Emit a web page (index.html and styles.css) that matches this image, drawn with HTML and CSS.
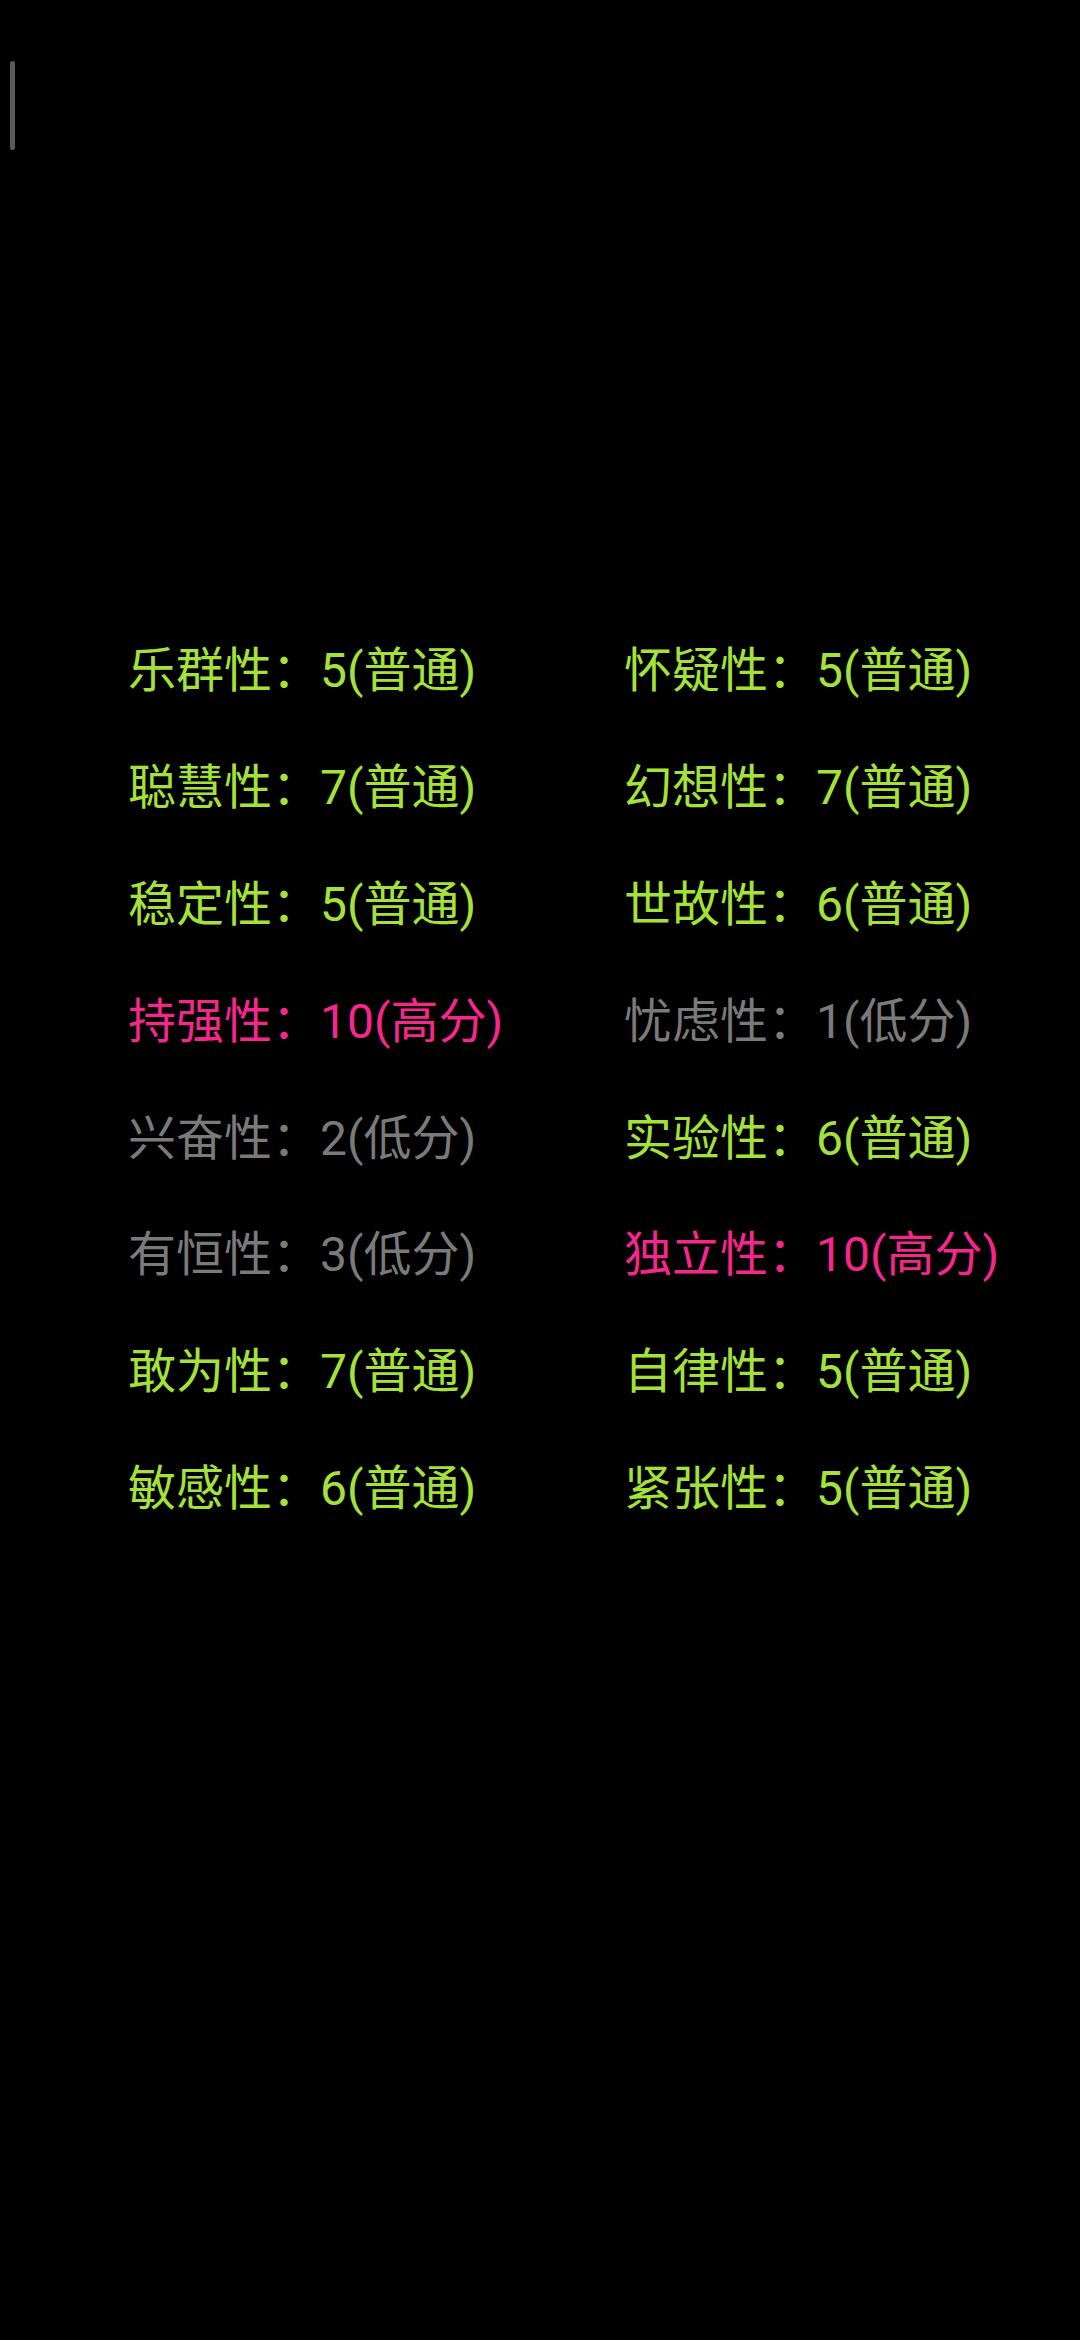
FILE: index.html
```html
<!DOCTYPE html>
<html lang="zh-CN">
<head>
<meta charset="utf-8">
<link rel="stylesheet" href="styles.css">
</head>
<body>
<div class="page">
  <div class="cursor"></div>
  <div class="grid">
    <div class="item normal">乐群性：5(普通)</div>
    <div class="item normal">怀疑性：5(普通)</div>
    <div class="item normal">聪慧性：7(普通)</div>
    <div class="item normal">幻想性：7(普通)</div>
    <div class="item normal">稳定性：5(普通)</div>
    <div class="item normal">世故性：6(普通)</div>
    <div class="item high">持强性：10(高分)</div>
    <div class="item low">忧虑性：1(低分)</div>
    <div class="item low">兴奋性：2(低分)</div>
    <div class="item normal">实验性：6(普通)</div>
    <div class="item low">有恒性：3(低分)</div>
    <div class="item high">独立性：10(高分)</div>
    <div class="item normal">敢为性：7(普通)</div>
    <div class="item normal">自律性：5(普通)</div>
    <div class="item normal">敏感性：6(普通)</div>
    <div class="item normal">紧张性：5(普通)</div>
  </div>
</div>
</body>
</html>
```
FILE: styles.css
```css
html, body {
  margin: 0;
  padding: 0;
  background: #000;
}
.page {
  width: 1080px;
  height: 2340px;
  background: #000;
  display: flex;
  flex-direction: column;
}
.cursor {
  width: 5px;
  height: 89px;
  margin: 61px 0 0 10px;
  background: #5a5a5a;
  border-radius: 3px;
}
.grid {
  margin-top: 458px;
  padding-left: 128px;
  display: grid;
  grid-template-columns: 496px 1fr;
  grid-auto-rows: 116.8px;
  font-family: Roboto, "Noto Sans CJK SC", sans-serif;
  font-size: 48px;
}
.item {
  display: flex;
  align-items: center;
  white-space: nowrap;
}
.normal { color: #a4e23a; }
.high { color: #f5268c; }
.low { color: #7a7a7a; }
```
